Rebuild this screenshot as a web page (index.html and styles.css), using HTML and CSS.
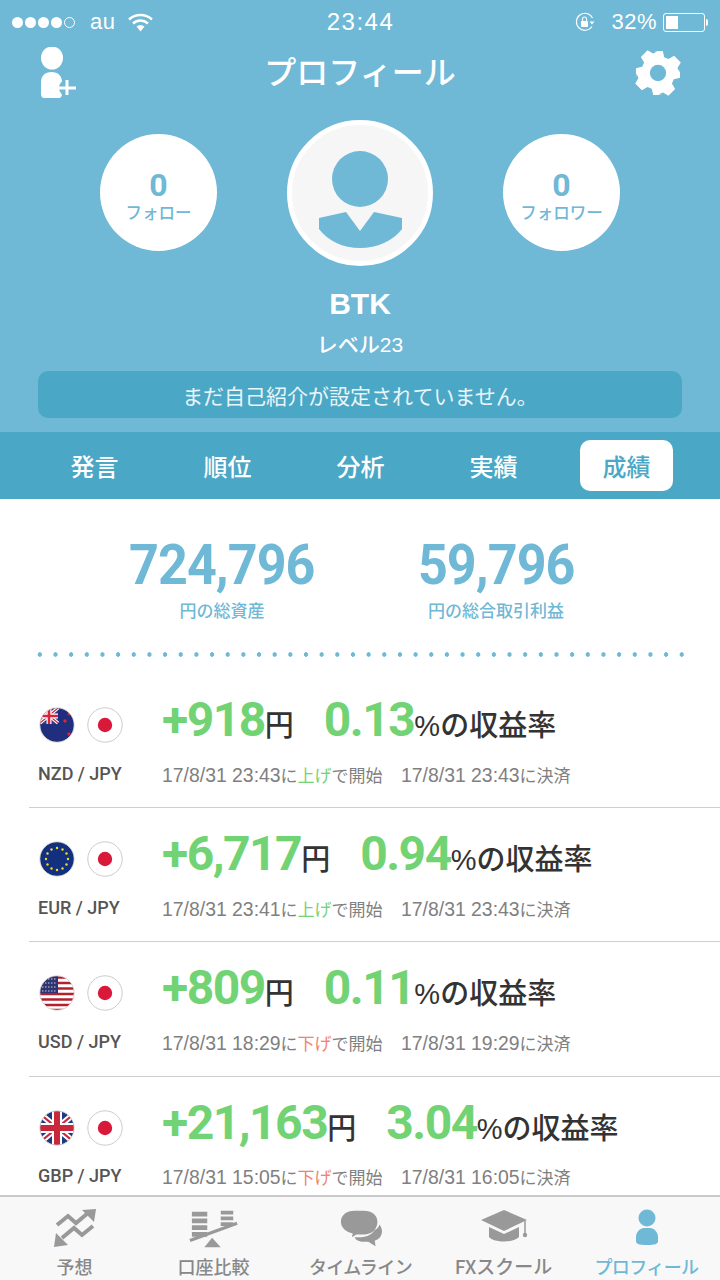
FILE: index.html
```html
<!DOCTYPE html>
<html lang="ja">
<head>
  <meta charset="UTF-8">
  <meta name="viewport" content="width=device-width, initial-scale=1.0">
  <title>プロフィール</title>
  <link rel="stylesheet" href="styles.css">
</head>
<body>
  <svg class="defs" width="0" height="0">
    <defs>
      <clipPath id="round"><circle cx="18" cy="18" r="17"/></clipPath>
      <symbol id="jp" viewBox="0 0 36 36">
        <circle cx="18" cy="18" r="17.2" fill="#fff" stroke="#ccc" stroke-width="1"/>
        <circle cx="18" cy="18" r="7.2" fill="#d9193a"/>
      </symbol>
      <symbol id="nz" viewBox="0 0 36 36">
        <g clip-path="url(#round)">
          <rect width="36" height="36" fill="#1f2f7e"/>
          <rect x="0" y="0" width="19" height="17" fill="#2b3a8c"/>
          <path d="M1 1 19 16M19 1 1 16" stroke="#fff" stroke-width="3.5"/>
          <path d="M1 1 19 16M19 1 1 16" stroke="#d9243c" stroke-width="1.2"/>
          <path d="M10 1v16M1 9h18" stroke="#fff" stroke-width="5"/>
          <path d="M10 1v16M1 9h18" stroke="#d9243c" stroke-width="2.6"/>
          <circle cx="26" cy="14" r="1.7" fill="#d9243c"/>
          <circle cx="30" cy="7" r="1.5" fill="#d9243c"/>
          <circle cx="30" cy="27" r="1.7" fill="#d9243c"/>
        </g>
        <circle cx="18" cy="18" r="17.2" fill="none" stroke="#ccc" stroke-width=".8"/>
      </symbol>
      <symbol id="eu" viewBox="0 0 36 36">
        <g clip-path="url(#round)">
          <rect width="36" height="36" fill="#13307f"/>
          <g fill="#f2d92e">
            <circle cx="18" cy="7" r="1.2"/><circle cx="23.500" cy="8.500" r="1.2"/>
            <circle cx="27.500" cy="12.500" r="1.2"/><circle cx="29" cy="18" r="1.2"/>
            <circle cx="27.500" cy="23.500" r="1.2"/><circle cx="23.500" cy="27.500" r="1.2"/>
            <circle cx="18" cy="29" r="1.2"/><circle cx="12.500" cy="27.500" r="1.2"/>
            <circle cx="8.500" cy="23.500" r="1.2"/><circle cx="7" cy="18" r="1.2"/>
            <circle cx="8.500" cy="12.500" r="1.2"/><circle cx="12.500" cy="8.500" r="1.2"/>
          </g>
        </g>
        <circle cx="18" cy="18" r="17.2" fill="none" stroke="#ccc" stroke-width=".8"/>
      </symbol>
      <symbol id="us" viewBox="0 0 36 36">
        <g clip-path="url(#round)">
          <rect width="36" height="36" fill="#fff"/>
          <path d="M0 2.500h36M0 8h36M0 13.500h36M0 19h36M0 24.500h36M0 30h36M0 35h36" stroke="#b5202f" stroke-width="2.700"/>
          <rect x="0" y="0" width="19" height="18" fill="#2c3472"/>
          <path d="M3 4h14M3 8h14M3 12h14M3 16h14" stroke="#c9cde0" stroke-width="1.200" stroke-dasharray="1.500 1.500"/>
        </g>
        <circle cx="18" cy="18" r="17.2" fill="none" stroke="#ccc" stroke-width=".8"/>
      </symbol>
      <symbol id="gb" viewBox="0 0 36 36">
        <g clip-path="url(#round)">
          <rect width="36" height="36" fill="#1f3a80"/>
          <path d="M0 3 36 33M36 3 0 33" stroke="#fff" stroke-width="6"/>
          <path d="M0 3 36 33M36 3 0 33" stroke="#c8283c" stroke-width="2"/>
          <path d="M18 0v36M0 18h36" stroke="#fff" stroke-width="10"/>
          <path d="M18 0v36M0 18h36" stroke="#c8283c" stroke-width="6"/>
        </g>
        <circle cx="18" cy="18" r="17.2" fill="none" stroke="#ccc" stroke-width=".8"/>
      </symbol>
    </defs>
  </svg>

  <div class="app">
    <div class="top">
      <div class="status">
        <div class="status-left">
          <span class="signal"><i></i><i></i><i></i><i></i><i class="off"></i></span>
          <span>au</span>
          <svg class="wifi" width="25" height="19" viewBox="0 0 25 19">
            <path d="M1 6.500C7.500 .5 17.500 .5 24 6.500" fill="none" stroke="#fff" stroke-width="2.400"/>
            <path d="M5 10.500C9.500 6.500 15.500 6.500 20 10.500" fill="none" stroke="#fff" stroke-width="2.400"/>
            <path d="M8.500 13.500C11 11.500 14 11.500 16.500 13.500L12.500 18.500Z" fill="#fff"/>
          </svg>
        </div>
        <div class="status-time">23:44</div>
        <div class="status-right">
          <svg width="20" height="20" viewBox="0 0 20 20">
            <path d="M17 14.500A8.500 8.500 0 1 1 17.500 6" fill="none" stroke="#fff" stroke-width="1.100"/>
            <path d="M14.500 9.500h5l-2.500 3z" fill="#fff"/>
            <rect x="6" y="9" width="7" height="6" rx="1" fill="#fff"/>
            <path d="M7.500 9V7a2 2 0 0 1 4 0v2" fill="none" stroke="#fff" stroke-width="1.200"/>
          </svg>
          <span class="pct">32%</span>
          <span class="battery"><i></i></span>
        </div>
      </div>

      <div class="nav">
        <svg class="nav-add" width="40" height="52" viewBox="0 0 40 52">
          <ellipse cx="12" cy="11" rx="11" ry="11.500" fill="#fff"/>
          <path d="M1 35C1 29 5 25 11.500 25S22 29 22 35v12c0 2-1 4-3 4H4c-2 0-3-2-3-4Z" fill="#fff"/>
          <circle cx="27" cy="41" r="8" fill="#6fb8d6"/>
          <path d="M27 33v15M19 41h17" stroke="#fff" stroke-width="3"/>
        </svg>
        <h1>プロフィール</h1>
        <svg class="nav-gear" width="46" height="46" viewBox="0 0 48 48">
          <path d="M19 1h10l1.500 6.500 4.500 2 5.800-3.400 7 7-3.400 5.800 2 4.500L47 19v10l-6.500 1.500-2 4.500 3.400 5.800-7 7-5.800-3.400-4.500 2L29 47H19l-1.500-6.500-4.500-2-5.800 3.400-7-7 3.400-5.800-2-4.500L1 29V19l6.500-1.500 2-4.500-3.400-5.800 7-7 5.800 3.400 4.500-2Z" fill="#fff"/>
          <circle cx="24" cy="24" r="8.500" fill="#6fb8d6"/>
        </svg>
      </div>

      <div class="profile">
        <div class="count"><b>0</b><span>フォロー</span></div>
        <div class="avatar">
          <svg width="136" height="136" viewBox="5 5 136 136">
            <circle cx="73" cy="59" r="28" fill="#6fb8d6"/>
            <path d="M32 98 59 92 73 111 87 92 115 98V109C106 121 90 128 73 128S41 121 32 109Z" fill="#6fb8d6"/>
          </svg>
        </div>
        <div class="count"><b>0</b><span>フォロワー</span></div>
      </div>
      <div class="name">BTK</div>
      <div class="level">レベル23</div>
      <div class="bio">まだ自己紹介が設定されていません。</div>
    </div>

    <div class="tabs">
      <a>発言</a>
      <a>順位</a>
      <a>分析</a>
      <a>実績</a>
      <a class="on">成績</a>
    </div>

    <div class="content">
      <div class="summary">
        <div class="sum"><b>724,796</b><span>円の総資産</span></div>
        <div class="sum"><b>59,796</b><span>円の総合取引利益</span></div>
      </div>
      <div class="dots"></div>

      <div class="row">
        <div class="flags"><svg><use href="#nz"/></svg><svg><use href="#jp"/></svg></div>
        <div class="gain"><b>+918</b><em>円</em><b class="rate">0.13</b><em>%の収益率</em></div>
        <div class="pair">NZD / JPY</div>
        <div class="detail"><span class="t1"><u>17/8/31 23:43</u>に<i class="up">上げ</i>で開始</span><span><u>17/8/31 23:43</u>に決済</span></div>
      </div>
      <div class="row">
        <div class="flags"><svg><use href="#eu"/></svg><svg><use href="#jp"/></svg></div>
        <div class="gain"><b>+6,717</b><em>円</em><b class="rate">0.94</b><em>%の収益率</em></div>
        <div class="pair">EUR / JPY</div>
        <div class="detail"><span class="t1"><u>17/8/31 23:41</u>に<i class="up">上げ</i>で開始</span><span><u>17/8/31 23:43</u>に決済</span></div>
      </div>
      <div class="row">
        <div class="flags"><svg><use href="#us"/></svg><svg><use href="#jp"/></svg></div>
        <div class="gain"><b>+809</b><em>円</em><b class="rate">0.11</b><em>%の収益率</em></div>
        <div class="pair">USD / JPY</div>
        <div class="detail"><span class="t1"><u>17/8/31 18:29</u>に<i class="down">下げ</i>で開始</span><span><u>17/8/31 19:29</u>に決済</span></div>
      </div>
      <div class="row">
        <div class="flags"><svg><use href="#gb"/></svg><svg><use href="#jp"/></svg></div>
        <div class="gain"><b>+21,163</b><em>円</em><b class="rate">3.04</b><em>%の収益率</em></div>
        <div class="pair">GBP / JPY</div>
        <div class="detail"><span class="t1"><u>17/8/31 15:05</u>に<i class="down">下げ</i>で開始</span><span><u>17/8/31 16:05</u>に決済</span></div>
      </div>
    </div>

    <div class="tabbar">
      <a>
        <svg width="44" height="40" viewBox="0 0 44 40">
          <path d="M4 16 15 7l8 7 12-10" fill="none" stroke="#999" stroke-width="4"/>
          <path d="M29 1 43 0 41 13Z" fill="#999"/>
          <path d="M40 17 29 26l-8-7L9 29" fill="none" stroke="#999" stroke-width="4"/>
          <path d="M1 38 3 24 15 36Z" fill="#999"/>
        </svg>
        <span>予想</span>
      </a>
      <a class="scale">
        <svg width="50" height="40" viewBox="0 0 52 40">
          <path d="M3 2h16v5H3zM3 9h16v5H3zM3 16h16v5H3zM3 23h16v5H3zM33 1h13v4H33zM33 7h13v4H33zM33 13h13v4H33z" fill="#999"/>
          <path d="M1 32 50 14" stroke="#999" stroke-width="3.500"/>
          <path d="M24 29 33 39H16Z" fill="#999"/>
        </svg>
        <span>口座比較</span>
      </a>
      <a class="tight">
        <svg width="42" height="38" viewBox="0 0 46 40">
          <path d="M16 0h10c9 0 15 5 15 12 0 8-6 14-15 14h-8l-5 3 1-4C7 23 1 19 1 12 1 5 7 0 16 0Z" fill="#999"/>
          <path d="M38 21c3-1 5-4 5-6 2 2 3 5 3 7 0 6-3 9-8 11l1 6-8-5h-5c-5 0-9-2-10-5h4c10 0 15-3 18-8Z" fill="#999"/>
        </svg>
        <span>タイムライン</span>
      </a>
      <a class="fx">
        <svg width="48" height="40" viewBox="0 0 48 40">
          <path d="M24 1 47 11 24 22 1 11Z" fill="#999"/>
          <path d="M9 18 24 25 39 18V28C34 34 14 34 9 28Z" fill="#999"/>
          <path d="M45 12V24" stroke="#999" stroke-width="1.500"/>
          <circle cx="45" cy="26" r="2.200" fill="#999"/>
        </svg>
        <span>FXスクール</span>
      </a>
      <a class="on tight">
        <svg width="24" height="40" viewBox="0 0 24 40">
          <circle cx="12" cy="9" r="8.500" fill="#6fb8d6"/>
          <path d="M1 28C1 23 5 19 9 19h6c4 0 8 4 8 9v4c0 3-3 4-11 4S1 35 1 32Z" fill="#6fb8d6"/>
        </svg>
        <span>プロフィール</span>
      </a>
    </div>
  </div>
</body>
</html>
```

FILE: styles.css
```css
* {
  box-sizing: border-box;
}
body {
  margin: 0;
  font-family: "Liberation Sans", "Noto Sans CJK JP", sans-serif;
  background: #fff;
}
.defs {
  position: absolute;
}
.app {
  width: 720px;
  height: 1280px;
  display: flex;
  flex-direction: column;
  overflow: hidden;
}

/* header */
.top {
  height: 432px;
  background: #6fb8d6;
  color: #fff;
  padding-top: 8px;
}
.status {
  height: 24px;
  display: grid;
  grid-template-columns: 1fr auto 1fr;
  align-items: center;
  padding: 0 15px 0 12px;
  font-size: 22px;
  letter-spacing: 0.5px;
}
.status-left {
  display: flex;
  align-items: center;
  gap: 15px;
}
.signal {
  display: flex;
  gap: 2px;
}
.signal i {
  width: 11px;
  height: 11px;
  border-radius: 50%;
  background: #fff;
}
.signal i.off {
  background: none;
  border: 1px solid #fff;
}
.wifi {
  margin-left: -2px;
}
.status-time {
  font-size: 24px;
  letter-spacing: 1.500px;
  padding-left: 4px;
}
.status-right {
  display: flex;
  align-items: center;
  justify-content: flex-end;
  gap: 6px;
}
.pct {
  margin-left: 10px;
}
.battery {
  width: 42px;
  height: 19px;
  border: 1px solid #fff;
  border-radius: 3px;
  padding: 2px;
  position: relative;
}
.battery i {
  display: block;
  width: 12px;
  height: 100%;
  background: #fff;
}
.battery::after {
  content: "";
  position: absolute;
  right: -4px;
  top: 5px;
  width: 2px;
  height: 7px;
  background: #fff;
  border-radius: 0 2px 2px 0;
}
.nav {
  height: 56px;
  margin-top: 13px;
  display: flex;
  align-items: center;
  justify-content: space-between;
  padding: 0 39px 0 40px;
  position: relative;
}
.nav h1 {
  position: absolute;
  left: 0;
  right: 0;
  margin: -6px 0 0;
  text-align: center;
  font-size: 32px;
  font-weight: 500;
}
.profile {
  height: 146px;
  margin-top: 19px;
  display: flex;
  justify-content: center;
  align-items: center;
  gap: 70px;
}
.count {
  width: 117px;
  height: 117px;
  margin-top: -2px;
  padding-top: 10px;
  border-radius: 50%;
  background: #fff;
  color: #6fb8d6;
  display: flex;
  flex-direction: column;
  align-items: center;
  justify-content: center;
}
.count b {
  font-family: Roboto, sans-serif;
  font-size: 32px;
  line-height: 30px;
  margin-top: 2px;
}
.count span {
  font-size: 16.500px;
  font-weight: 500;
  line-height: 26px;
  white-space: nowrap;
}
.avatar {
  width: 146px;
  height: 146px;
  border-radius: 50%;
  background: #f6f6f6;
  border: 5px solid #fff;
}
.avatar svg {
  display: block;
}
.name {
  margin-top: 20px;
  text-align: center;
  font-size: 30px;
  font-weight: 700;
  line-height: 36px;
}
.level {
  margin-top: 8px;
  text-align: center;
  font-size: 21px;
  font-weight: 500;
  line-height: 30px;
}
.bio {
  height: 47px;
  margin: 11px 38px 0;
  background: #4aa8c6;
  border-radius: 10px;
  display: flex;
  align-items: center;
  justify-content: center;
  font-size: 21px;
  color: #e9f5f9;
}

/* tabs */
.tabs {
  height: 67px;
  background: #4aa8c6;
  padding: 8px 46px 8px 28px;
  display: grid;
  grid-template-columns: repeat(5, 133px);
  justify-items: center;
  align-items: center;
}
.tabs a {
  width: 93px;
  height: 51px;
  border-radius: 10px;
  display: flex;
  align-items: center;
  justify-content: center;
  color: #fff;
  font-size: 24px;
  font-weight: 500;
}
.tabs a.on {
  background: #fff;
  color: #4aa8c6;
}

/* results */
.content {
  flex: 1;
  min-height: 0;
  overflow: hidden;
  background: #fff;
}
.summary {
  height: 150px;
  padding: 36px 0 0 85px;
  display: grid;
  grid-template-columns: 274px 274px;
}
.sum {
  display: flex;
  flex-direction: column;
  align-items: center;
  color: #6fb8d6;
}
.sum b {
  font-family: Roboto, sans-serif;
  font-size: 56px;
  line-height: 60px;
  letter-spacing: -1px;
  transform: scaleX(0.93);
}
.sum span {
  font-size: 17px;
  font-weight: 500;
  line-height: 24px;
  margin-top: 5px;
}
.dots {
  height: 5px;
  margin: 3px 30px 0 32px;
  background: radial-gradient(circle, #6fb8d6 2px, transparent 2.500px) 0 0 / 15.660px 5px repeat-x;
}
.row {
  height: 134.400px;
  margin-left: 29px;
  padding: 19px 0 0 10px;
  border-bottom: 1px solid #cfcfd2;
  display: grid;
  grid-template-columns: 123px 1fr;
  grid-template-rows: 54px 26px;
  row-gap: 14px;
  align-items: center;
}
.dots + .row {
  height: 151px;
  padding-top: 36px;
}
.flags {
  display: flex;
  gap: 12px;
  margin-top: 10px;
}
.flags svg {
  width: 36px;
  height: 36px;
}
.gain {
  display: flex;
  align-items: baseline;
}
.gain b {
  font-family: Roboto, sans-serif;
  font-size: 48px;
  line-height: 54px;
  letter-spacing: -1.500px;
  color: #72d374;
}
.gain em {
  font-style: normal;
  font-size: 29px;
  font-weight: 500;
  color: #333;
}
.gain .rate {
  margin-left: 30px;
}
.pair {
  margin: -2px 0 0 -1px;
  font-family: Roboto, sans-serif;
  font-size: 18px;
  font-weight: 500;
  color: #555;
}
.detail {
  display: flex;
  align-items: baseline;
  font-size: 17px;
  color: #808080;
}
.detail u {
  text-decoration: none;
  font-size: 19.400px;
}
.t1 {
  width: 239px;
}
.detail i {
  font-style: normal;
}
.up {
  color: #72d374;
}
.down {
  color: #f0836f;
}

/* bottom bar */
.tabbar {
  height: 85px;
  background: #f8f8f8;
  border-top: 2px solid #cacaca;
  display: grid;
  grid-template-columns: repeat(5, 143px);
  padding-left: 3px;
}
.tabbar a {
  display: flex;
  flex-direction: column;
  align-items: center;
  padding-top: 12px;
  color: #888;
  font-family: "Noto Sans CJK JP", sans-serif;
  font-size: 18px;
  font-weight: 500;
  white-space: nowrap;
}
.tabbar svg {
  height: 40px;
}
.tabbar span {
  line-height: 24px;
  margin-top: 5px;
}
.tabbar a.scale {
  margin-right: 8px;
}
.tabbar a.tight {
  letter-spacing: -0.600px;
}
.tabbar a.fx {
  font-size: 19px;
}
.tabbar a.on {
  color: #6fb8d6;
}
```
